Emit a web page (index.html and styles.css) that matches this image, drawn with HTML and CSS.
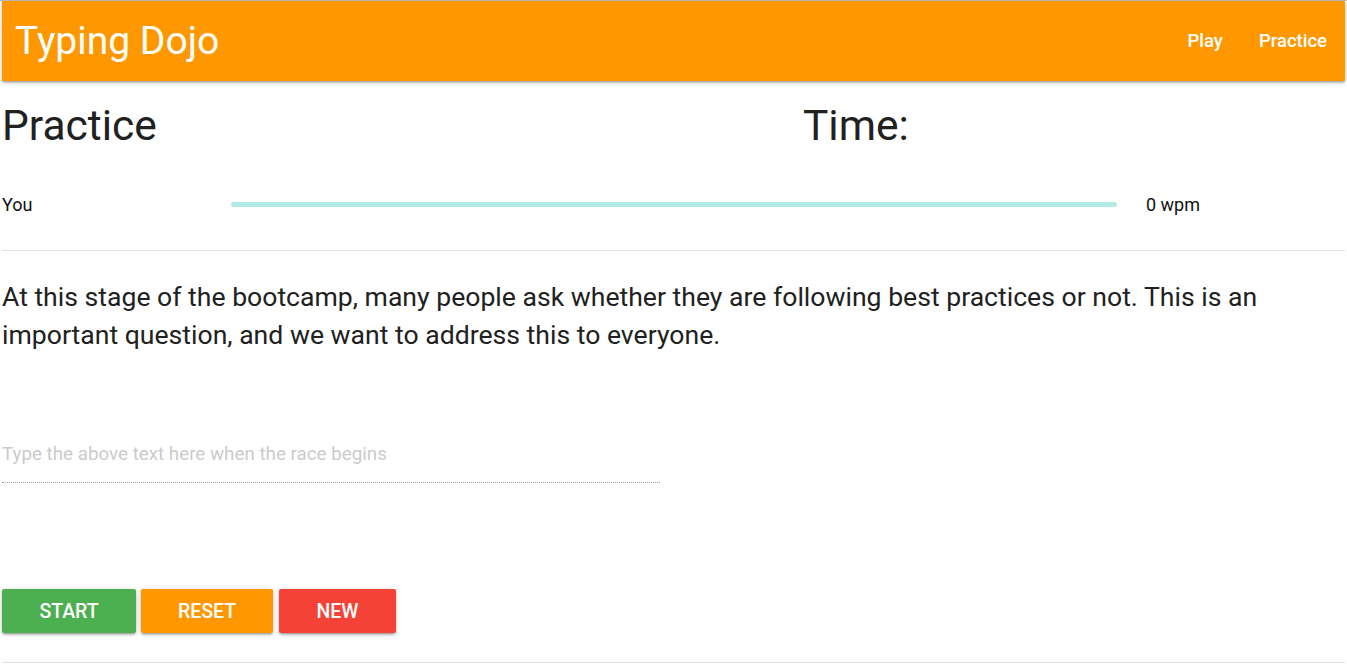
FILE: index.html
```html
<!DOCTYPE html>
<html>
<head>
<meta charset="utf-8">
<link rel="stylesheet" href="styles.css">
</head>
<body>
<nav class="nav">
  <a class="brand">Typing Dojo</a>
  <ul class="links">
    <li><a>Play</a></li>
    <li><a>Practice</a></li>
  </ul>
</nav>
<main class="main">
  <div class="head-row">
    <h3 class="title">Practice</h3>
    <h3 class="title">Time:</h3>
  </div>
  <div class="racer">
    <span class="racer-name">You</span>
    <div class="track"><div class="bar"></div></div>
    <span class="wpm">0 wpm</span>
  </div>
  <hr class="rule">
  <p class="passage">At this stage of the bootcamp, many people ask whether they are following best practices or not. This is an important question, and we want to address this to everyone.</p>
  <div class="input-wrap">
    <input class="typer" type="text" placeholder="Type the above text here when the race begins">
  </div>
  <div class="buttons">
    <button class="btn green">Start</button>
    <button class="btn orange">Reset</button>
    <button class="btn red">New</button>
  </div>
  <hr class="rule bottom">
</main>
</body>
</html>
```
FILE: styles.css
```css
* { box-sizing: border-box; }
html { background: #fff; }
body {
  margin: 0;
  padding: 0 2px;
  border-top: 1px solid #b5b5b5;
  font-family: Roboto, "Noto Sans", sans-serif;
  color: rgba(0,0,0,0.87);
}
.nav {
  height: 80px;
  background: #ff9800;
  display: flex;
  align-items: center;
  justify-content: space-between;
  box-shadow: 0 2px 2px 0 rgba(0,0,0,0.14), 0 3px 1px -2px rgba(0,0,0,0.12), 0 1px 5px 0 rgba(0,0,0,0.2);
  color: #fff;
}
.brand {
  font-size: 39px;
  padding-left: 13px;
  color: #fff;
  line-height: 80px;
}
.links {
  list-style: none;
  margin: 0;
  padding: 0;
  display: flex;
}
.links a {
  display: block;
  padding: 0 18px;
  font-size: 18.5px;
  font-weight: 500;
  line-height: 80px;
  color: #fff;
}
.head-row {
  display: grid;
  grid-template-columns: 801px 1fr;
  margin-top: 21px;
}
.title {
  margin: 0;
  font-size: 42.5px;
  font-weight: 400;
  line-height: 48px;
  color: #212121;
}
.racer {
  display: grid;
  grid-template-columns: 229px 886px 1fr;
  align-items: center;
  margin-top: 44px;
  font-size: 18px;
  line-height: 21px;
  color: #111;
}
.bar {
  height: 5px;
  border-radius: 3px;
  background: #b2ebe5;
}
.wpm { padding-left: 29px; }
.rule {
  border: 0;
  border-top: 1px solid #e0e0e0;
  margin: 35px 0 0;
}
.passage {
  margin: 27px 0 0;
  font-size: 26.6px;
  line-height: 38px;
  color: #212121;
}
.input-wrap { margin-top: 71px; width: 658px; }
.typer {
  display: block;
  width: 100%;
  border: 0;
  border-bottom: 1px dotted #9e9e9e;
  outline: none;
  font-family: Roboto, sans-serif;
  font-size: 18.8px;
  height: 58px;
  padding: 0;
  background: transparent;
}
.typer::placeholder { color: #cbcbcb; }
.buttons {
  display: flex;
  gap: 5px;
  margin-top: 106px;
}
.btn {
  height: 44px;
  border: 0;
  border-radius: 2px;
  color: #fff;
  font-family: Roboto, sans-serif;
  font-size: 19.5px;
  font-weight: 500;
  text-transform: uppercase;
  box-shadow: 0 2px 2px 0 rgba(0,0,0,0.14), 0 3px 1px -2px rgba(0,0,0,0.12), 0 1px 5px 0 rgba(0,0,0,0.2);
}
.green { background: #4caf50; width: 134px; }
.orange { background: #ff9800; width: 132px; }
.red { background: #f44336; width: 117px; margin-left: 1px; }
.rule.bottom { margin-top: 29px; }
```
